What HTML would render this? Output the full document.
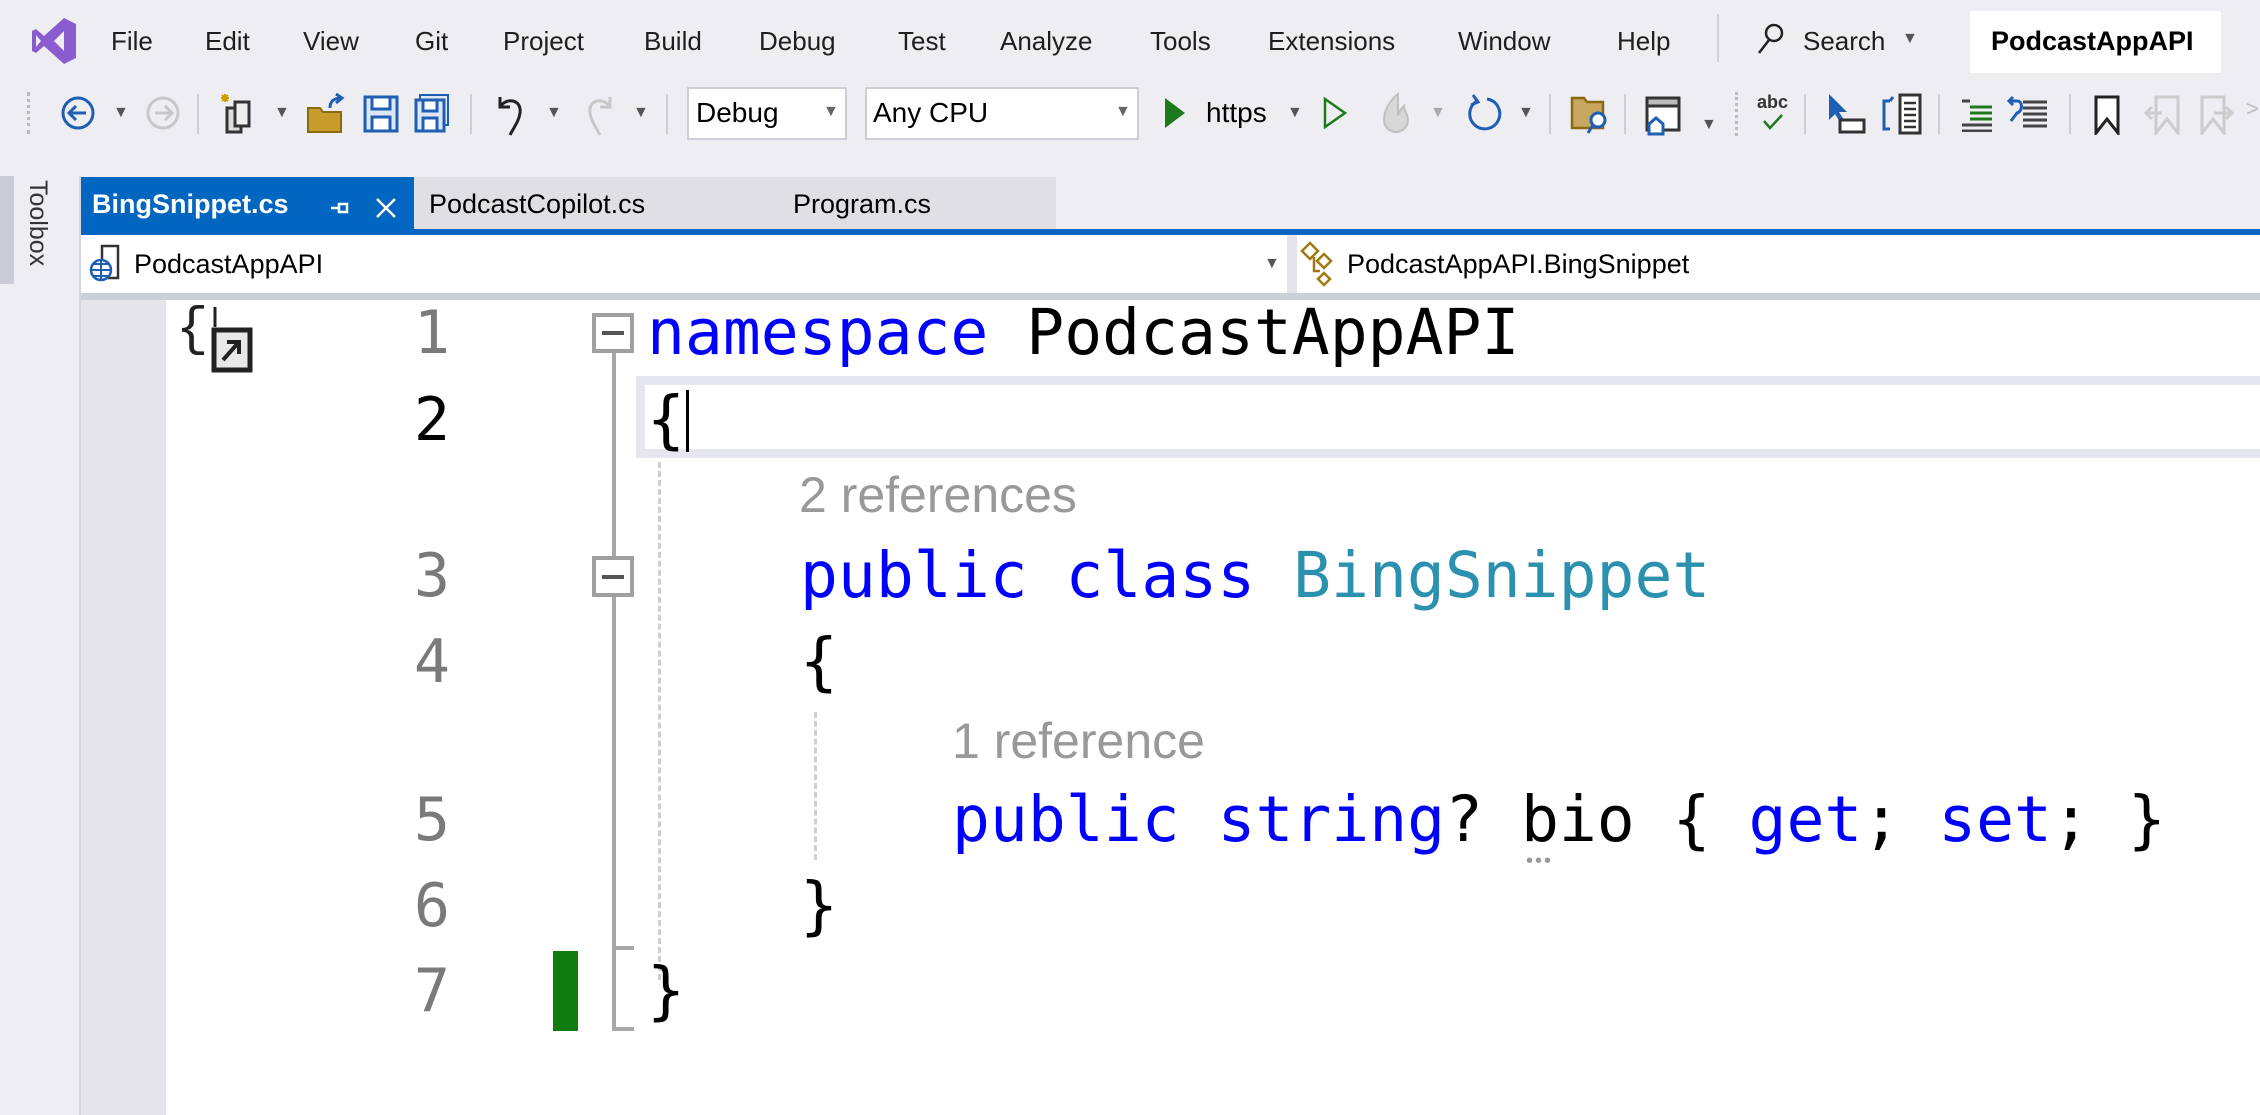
<!DOCTYPE html>
<html><head><meta charset="utf-8"><style>
*{margin:0;padding:0;box-sizing:border-box}
body{width:2260px;height:1115px;background:#eeeef2;position:relative;overflow:hidden;font-family:"Liberation Sans",sans-serif;color:#1e1e1e}
.a{position:absolute;white-space:pre}
.m{font-size:26px;top:26px}
.code{font-family:"DejaVu Sans Mono","Liberation Mono",monospace;font-size:63px;line-height:80px;height:80px;color:#000}
.ln{font-family:"DejaVu Sans Mono","Liberation Mono",monospace;font-size:60px;line-height:80px;color:#7a7a7a;width:120px;text-align:right;left:330px}
.kw{color:#0000ff}.ty{color:#2b91af}
.lens{font-size:50px;color:#999;line-height:60px;letter-spacing:0}
.sep{position:absolute;width:2px;background:#cdcdd6;top:94px;height:40px}
.dd{position:absolute;font-size:16px;color:#555}
</style></head><body>
<!-- VS logo -->
<svg class="a" style="left:30px;top:16px" width="48" height="50" viewBox="0 0 48 50"><path d="M34 2 L46 8 V42 L34 48 L14 30 L6 37 L2 35 V15 L6 13 L14 20 Z M34 15 L24 25 L34 35 Z M6 19 V31 L11 25 Z" fill="#8a5cd0" fill-rule="evenodd"/></svg>
<div class="a m" style="left:111px">File</div>
<div class="a m" style="left:205px">Edit</div>
<div class="a m" style="left:303px">View</div>
<div class="a m" style="left:415px">Git</div>
<div class="a m" style="left:503px">Project</div>
<div class="a m" style="left:644px">Build</div>
<div class="a m" style="left:759px">Debug</div>
<div class="a m" style="left:898px">Test</div>
<div class="a m" style="left:1000px">Analyze</div>
<div class="a m" style="left:1150px">Tools</div>
<div class="a m" style="left:1268px">Extensions</div>
<div class="a m" style="left:1458px">Window</div>
<div class="a m" style="left:1617px">Help</div>
<div class="a" style="left:1717px;top:14px;width:2px;height:48px;background:#d0d0d8"></div>
<svg class="a" style="left:1756px;top:22px" width="30" height="34" viewBox="0 0 30 34"><circle cx="18" cy="11" r="8" fill="none" stroke="#222" stroke-width="2.5"/><path d="M13 18 L3 31" stroke="#222" stroke-width="2.5"/></svg>
<div class="a m" style="left:1803px">Search</div>
<div class="dd" style="left:1902px;top:30px">▼</div>
<div class="a" style="left:1970px;top:11px;width:251px;height:62px;background:#fff"></div>
<div class="a" style="left:1991px;top:26px;font-size:27px;font-weight:bold;color:#000">PodcastAppAPI</div>

<!-- toolbar -->
<div class="a" style="left:27px;top:92px;width:3px;height:42px;border-left:3px dotted #bbb"></div>
<svg class="a" style="left:60px;top:95px" width="36" height="36"><circle cx="18" cy="18" r="15" fill="none" stroke="#1e5fb3" stroke-width="3"/><path d="M26 18H10M16 11l-7 7 7 7" fill="none" stroke="#1e5fb3" stroke-width="3"/></svg>
<div class="dd" style="left:113px;top:104px">▼</div>
<svg class="a" style="left:145px;top:95px" width="36" height="36"><circle cx="18" cy="18" r="15" fill="none" stroke="#c8c8c8" stroke-width="3"/><path d="M10 18H26M20 11l7 7-7 7" fill="none" stroke="#c8c8c8" stroke-width="3"/></svg>
<div class="sep" style="left:197px"></div>
<svg class="a" style="left:219px;top:92px" width="38" height="44"><path d="M6 2v8M2 6h8M3 3l6 6M9 3l-6 6" stroke="#c8a000" stroke-width="2"/><rect x="8" y="16" width="14" height="24" fill="#ddd" stroke="#333" stroke-width="3"/><rect x="16" y="10" width="14" height="24" fill="#eee" stroke="#333" stroke-width="3"/></svg>
<div class="dd" style="left:274px;top:104px">▼</div>
<svg class="a" style="left:306px;top:92px" width="40" height="44"><path d="M2 16h12l3 4h18v20H2z" fill="#c79c2a" stroke="#8a6a10" stroke-width="2"/><path d="M24 16c0-8 5-10 12-10M30 2l6 4-6 5" fill="none" stroke="#1e5fb3" stroke-width="3"/></svg>
<svg class="a" style="left:363px;top:95px" width="36" height="38"><rect x="2" y="2" width="32" height="34" fill="#dde6f5" stroke="#1e5fb3" stroke-width="3"/><rect x="9" y="2" width="18" height="12" fill="#fff" stroke="#1e5fb3" stroke-width="3"/><rect x="9" y="22" width="18" height="14" fill="#fff" stroke="#1e5fb3" stroke-width="3"/></svg>
<svg class="a" style="left:414px;top:93px" width="36" height="40"><rect x="6" y="2" width="28" height="30" fill="#dde6f5" stroke="#1e5fb3" stroke-width="2"/><rect x="2" y="7" width="28" height="31" fill="#dde6f5" stroke="#1e5fb3" stroke-width="3"/><rect x="9" y="7" width="14" height="11" fill="#fff" stroke="#1e5fb3" stroke-width="3"/><rect x="9" y="25" width="14" height="13" fill="#fff" stroke="#1e5fb3" stroke-width="3"/></svg>
<div class="sep" style="left:470px"></div>
<svg class="a" style="left:494px;top:93px" width="34" height="44"><path d="M6 4v10h10" fill="none" stroke="#222" stroke-width="3"/><path d="M6 14c6-10 22-8 20 6-1 8-6 14-10 22" fill="none" stroke="#222" stroke-width="3"/></svg>
<div class="dd" style="left:546px;top:104px">▼</div>
<svg class="a" style="left:582px;top:93px" width="34" height="44"><path d="M28 4v10H18" fill="none" stroke="#c8c8c8" stroke-width="3"/><path d="M28 14c-6-10-22-8-20 6 1 8 6 14 10 22" fill="none" stroke="#c8c8c8" stroke-width="3"/></svg>
<div class="dd" style="left:633px;top:104px">▼</div>
<div class="sep" style="left:666px"></div>
<div class="a" style="left:687px;top:87px;width:160px;height:53px;background:#fff;border:2px solid #ccced8"></div>
<div class="a" style="left:696px;top:97px;font-size:28px;color:#000">Debug</div>
<div class="dd" style="left:823px;top:103px;color:#666">▼</div>
<div class="a" style="left:865px;top:87px;width:274px;height:53px;background:#fff;border:2px solid #ccced8"></div>
<div class="a" style="left:873px;top:97px;font-size:28px;color:#000">Any CPU</div>
<div class="dd" style="left:1115px;top:103px;color:#666">▼</div>
<svg class="a" style="left:1163px;top:96px" width="24" height="34"><path d="M2 2L22 17L2 32Z" fill="#1c7a1c"/></svg>
<div class="a" style="left:1206px;top:97px;font-size:28px;color:#000">https</div>
<div class="dd" style="left:1287px;top:104px">▼</div>
<svg class="a" style="left:1322px;top:96px" width="26" height="34"><path d="M3 3L23 17L3 31Z" fill="none" stroke="#1c7a1c" stroke-width="2.5"/></svg>
<svg class="a" style="left:1380px;top:92px" width="34" height="44"><path d="M18 2c-10 8-14 18-14 26a12 12 0 0 0 24 0c0-6-4-8-4-14-4 4-6 8-6 10 0-8 0-14 0-22z" fill="#d8d8d8" stroke="#c0c0c0" stroke-width="2"/></svg>
<div class="dd" style="left:1430px;top:104px;color:#aaa">▼</div>
<svg class="a" style="left:1465px;top:93px" width="38" height="42"><path d="M12 8A15 15 0 1 0 22 6" fill="none" stroke="#1e5fb3" stroke-width="3"/><path d="M8 2l5 7-7 3" fill="none" stroke="#1e5fb3" stroke-width="3"/></svg>
<div class="dd" style="left:1518px;top:104px">▼</div>
<div class="sep" style="left:1549px"></div>
<svg class="a" style="left:1570px;top:94px" width="40" height="42"><path d="M2 4h12l3 4h16v26H2z" fill="#c8a860" stroke="#8a6a10" stroke-width="2.5"/><circle cx="28" cy="26" r="7" fill="#fff" stroke="#1e5fb3" stroke-width="3"/><path d="M23 31l-5 8" stroke="#1e5fb3" stroke-width="3"/></svg>
<div class="sep" style="left:1624px"></div>
<svg class="a" style="left:1645px;top:96px" width="38" height="40"><rect x="2" y="2" width="32" height="32" fill="#fff" stroke="#333" stroke-width="3"/><rect x="2" y="2" width="32" height="8" fill="#bbb" stroke="#333" stroke-width="3"/><path d="M4 38V28l7-6 7 6v10z" fill="#fff" stroke="#1e5fb3" stroke-width="3"/></svg>
<div class="dd" style="left:1701px;top:116px">▼</div>
<div class="a" style="left:1735px;top:92px;width:3px;height:44px;border-left:3px dotted #bbb"></div>
<div class="a" style="left:1757px;top:92px;font-size:18px;font-weight:bold;color:#333">abc</div>
<svg class="a" style="left:1762px;top:113px" width="22" height="18"><path d="M2 8l6 7L20 2" fill="none" stroke="#1c7a1c" stroke-width="2.5"/></svg>
<div class="sep" style="left:1804px"></div>
<svg class="a" style="left:1826px;top:92px" width="42" height="44"><path d="M3 2v26l6-6 5 8 4-2-5-8h8z" fill="#1e5fb3"/><rect x="14" y="28" width="24" height="12" fill="#fff" stroke="#333" stroke-width="3"/></svg>
<svg class="a" style="left:1880px;top:93px" width="42" height="42"><rect x="20" y="2" width="20" height="38" fill="#fff" stroke="#333" stroke-width="3"/><path d="M24 10h12M24 16h12M24 22h12M24 28h12M24 34h12" stroke="#333" stroke-width="2.5"/><path d="M10 8H4v28h6M10 8l3-4" fill="none" stroke="#1e5fb3" stroke-width="3"/></svg>
<div class="sep" style="left:1938px"></div>
<svg class="a" style="left:1960px;top:98px" width="34" height="34"><path d="M2 3h8M10 9h22M10 15h22M10 21h22M2 27h30M2 33h30" stroke="#444" stroke-width="3"/><path d="M10 9h22M10 15h22M10 21h22" stroke="#1c7a1c" stroke-width="3"/></svg>
<svg class="a" style="left:2007px;top:93px" width="42" height="40"><path d="M16 9h24M16 15h24M16 21h24M16 27h24M16 33h24" stroke="#444" stroke-width="3"/><path d="M6 4l-4 4 4 4M2 8h8c6 0 6 10 0 12l-6 8" fill="none" stroke="#1e5fb3" stroke-width="3"/></svg>
<div class="sep" style="left:2069px"></div>
<svg class="a" style="left:2093px;top:95px" width="28" height="40"><path d="M3 2h22v36l-11-14L3 38z" fill="#fff" stroke="#222" stroke-width="3"/></svg>
<svg class="a" style="left:2144px;top:95px" width="38" height="40"><path d="M12 2h22v36l-11-14-11 14z" fill="none" stroke="#ccc" stroke-width="3"/><path d="M18 18H2M8 12l-6 6 6 6" fill="none" stroke="#ccc" stroke-width="3"/></svg>
<svg class="a" style="left:2198px;top:95px" width="38" height="40"><path d="M4 2h22v36L15 24 4 38z" fill="none" stroke="#ccc" stroke-width="3"/><path d="M16 18h18M28 12l6 6-6 6" fill="none" stroke="#ccc" stroke-width="3"/></svg>
<div class="a" style="left:2246px;top:96px;font-size:22px;color:#bbb">&gt;</div>

<!-- toolbox strip -->
<div class="a" style="left:0;top:176px;width:14px;height:108px;background:#cbcbd6"></div>
<div class="a" style="left:22px;top:180px;font-size:25px;color:#333;transform-origin:0 0;transform:translate(30px,0) rotate(90deg)">Toolbox</div>
<div class="a" style="left:79px;top:176px;width:2px;height:939px;background:#d6d6de"></div>

<!-- tabs -->
<div class="a" style="left:81px;top:177px;width:333px;height:53px;background:#0066bf"></div>
<div class="a" style="left:92px;top:189px;font-size:27px;font-weight:bold;color:#fff">BingSnippet.cs</div>
<svg class="a" style="left:329px;top:200px" width="22" height="16"><path d="M2 8h8M10 3v10M10 4h8v8h-8" fill="none" stroke="#fff" stroke-width="2.5"/></svg>
<svg class="a" style="left:374px;top:196px" width="24" height="24"><path d="M3 3L21 21M21 3L3 21" stroke="#fff" stroke-width="2.5"/></svg>
<div class="a" style="left:414px;top:177px;width:642px;height:53px;background:#e0e0e4"></div>
<div class="a" style="left:429px;top:189px;font-size:27px;color:#000">PodcastCopilot.cs</div>
<div class="a" style="left:793px;top:189px;font-size:27px;color:#000">Program.cs</div>
<div class="a" style="left:81px;top:229px;width:2179px;height:6px;background:#0066bf"></div>

<!-- nav bar -->
<div class="a" style="left:81px;top:235px;width:2179px;height:58px;background:#fff"></div>
<div class="a" style="left:1287px;top:235px;width:10px;height:58px;background:#e4e4ea"></div>
<svg class="a" style="left:88px;top:243px" width="44" height="40"><rect x="14" y="3" width="16" height="32" fill="#fff" stroke="#333" stroke-width="2.5"/><circle cx="13" cy="27" r="10" fill="#fff" stroke="#1e5fb3" stroke-width="2.5"/><path d="M3 27h20M13 17v20M6 21h14M6 33h14" stroke="#1e5fb3" stroke-width="2"/></svg>
<div class="a" style="left:134px;top:249px;font-size:27px;color:#000">PodcastAppAPI</div>
<div class="dd" style="left:1264px;top:255px;color:#555">▼</div>
<svg class="a" style="left:1300px;top:240px" width="44" height="48"><path d="M10 3l8 8-8 8-8-8z M24 14l7 7-7 7-7-7z M24 33l6 6-6 6-6-6z M14 17v14h6" fill="none" stroke="#a07a10" stroke-width="2.5"/></svg>
<div class="a" style="left:1347px;top:249px;font-size:27px;color:#000">PodcastAppAPI.BingSnippet</div>
<div class="a" style="left:81px;top:293px;width:2179px;height:7px;background:#ccced8"></div>

<!-- editor -->
<div class="a" style="left:81px;top:300px;width:85px;height:815px;background:#e6e6ea"></div>
<div class="a" style="left:166px;top:300px;width:2094px;height:815px;background:#fff"></div>
<div class="a" style="left:176px;top:300px;font-family:'Liberation Mono',monospace;font-size:54px;color:#222">{</div>
<svg class="a" style="left:210px;top:304px" width="44" height="72"><path d="M5 3v20" stroke="#222" stroke-width="3"/><rect x="4" y="26" width="36" height="40" fill="#e8e8e8" stroke="#222" stroke-width="5"/><path d="M13 56L29 38M17 38h12v12" fill="none" stroke="#222" stroke-width="4"/></svg>

<!-- current line highlight -->
<div class="a" style="left:636px;top:376px;width:1624px;height:82px;border:9px solid #e6e6f0;border-right:none;background:#fff"></div>
<div class="a" style="left:686px;top:390px;width:3px;height:62px;background:#000"></div>

<!-- line numbers -->
<div class="a ln" style="top:293px">1</div>
<div class="a ln" style="top:380px;color:#000">2</div>
<div class="a ln" style="top:536px">3</div>
<div class="a ln" style="top:622px">4</div>
<div class="a ln" style="top:780px">5</div>
<div class="a ln" style="top:866px">6</div>
<div class="a ln" style="top:951px">7</div>

<!-- outlining -->
<div class="a" style="left:592px;top:313px;width:42px;height:40px;border:4px solid #a0a0a0;background:#fff"></div>
<div class="a" style="left:602px;top:331px;width:22px;height:4px;background:#555"></div>
<div class="a" style="left:612px;top:353px;width:4px;height:203px;background:#a8a8a8"></div>
<div class="a" style="left:592px;top:556px;width:42px;height:41px;border:4px solid #a0a0a0;background:#fff"></div>
<div class="a" style="left:602px;top:575px;width:22px;height:4px;background:#555"></div>
<div class="a" style="left:612px;top:597px;width:4px;height:434px;background:#a8a8a8"></div>
<div class="a" style="left:612px;top:946px;width:22px;height:4px;background:#a8a8a8"></div>
<div class="a" style="left:612px;top:1027px;width:22px;height:4px;background:#a8a8a8"></div>
<div class="a" style="left:658px;top:462px;width:0;height:518px;border-left:3px dashed #cfcfcf"></div>
<div class="a" style="left:814px;top:712px;width:0;height:148px;border-left:3px dashed #cfcfcf"></div>
<div class="a" style="left:553px;top:951px;width:25px;height:80px;background:#107c10"></div>

<!-- code -->
<div class="a code" style="left:647px;top:293px"><span class="kw">namespace</span> PodcastAppAPI</div>
<div class="a code" style="left:647px;top:380px">{</div>
<div class="a lens" style="left:799px;top:465px">2 references</div>
<div class="a code" style="left:800px;top:536px"><span class="kw">public</span> <span class="kw">class</span> <span class="ty">BingSnippet</span></div>
<div class="a code" style="left:800px;top:622px">{</div>
<div class="a lens" style="left:952px;top:711px">1 reference</div>
<div class="a code" style="left:952px;top:780px"><span class="kw">public</span> <span class="kw">string</span>? bio { <span class="kw">get</span>; <span class="kw">set</span>; }</div>
<div class="a" style="left:1526px;top:850px;font-size:20px;color:#999;letter-spacing:2px">•••</div>
<div class="a code" style="left:800px;top:866px">}</div>
<div class="a code" style="left:647px;top:951px">}</div>
</body></html>
